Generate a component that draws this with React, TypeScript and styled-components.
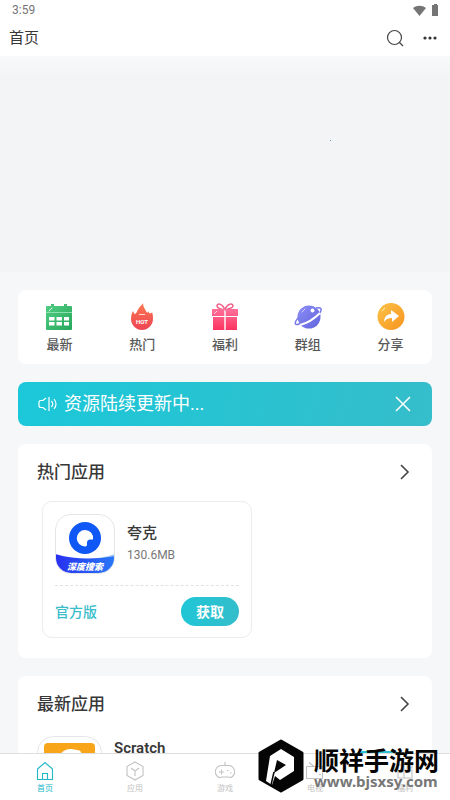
import React, { type ReactNode } from "react";
import styled, { createGlobalStyle } from "styled-components";

const GlobalStyle = createGlobalStyle`
  * { box-sizing: border-box; }
  body { margin: 0; background: #f6f7f9; }
  button { border: 0; padding: 0; background: none; font: inherit; color: inherit; cursor: pointer; }
  a { color: inherit; text-decoration: none; }
  h1, h2, h3, p { margin: 0; }
  svg { display: block; flex: none; }
`;

const Page = styled.div`
  position: relative;
  display: flex;
  flex-direction: column;
  height: 100vh;
  overflow: hidden;
  background: #f6f7f9;
  color: #383838;
  font-family: Roboto, "Noto Sans CJK SC", sans-serif;
`;

const StatusBar = styled.div`
  display: flex;
  flex: none;
  align-items: center;
  justify-content: space-between;
  height: 20px;
  padding: 0 11px 0 12px;
  background: #fff;
  color: #757575;
  font-size: 12px;
  line-height: 20px;
`;

const StatusIcons = styled.div`
  display: flex;
  align-items: center;
  gap: 5px;
`;

const TitleBar = styled.header`
  display: flex;
  flex: none;
  align-items: center;
  justify-content: space-between;
  height: 36px;
  padding: 0 12px 0 9px;
  background: #fff;
`;

const PageTitle = styled.h1`
  font-size: 15px;
  font-weight: 400;
  line-height: 20px;
`;

const TitleActions = styled.div`
  display: flex;
  align-items: center;
  gap: 18px;
`;

const Content = styled.main`
  flex: 1;
  min-height: 0;
  overflow: hidden;
`;

const Banner = styled.section`
  position: relative;
  height: 216px;
  background: linear-gradient(#f8f9fa, #f2f4f6 22px);
`;

const BannerDot = styled.span`
  position: absolute;
  top: 84px;
  right: 119px;
  width: 1px;
  height: 1px;
  background: #5fa3a0;
`;

const Sections = styled.div`
  display: flex;
  flex-direction: column;
  gap: 18px;
  padding: 18px;
`;

const Shortcuts = styled.nav`
  display: grid;
  grid-template-columns: repeat(5, 1fr);
  height: 74px;
  border-radius: 8px;
  background: #fff;
`;

const Shortcut = styled.a`
  display: flex;
  flex-direction: column;
  align-items: center;
  gap: 4px;
  padding-top: 13px;
  color: #585858;
  font-size: 13px;
  font-weight: 500;
  line-height: 20px;
`;

const Notice = styled.section`
  display: flex;
  align-items: center;
  gap: 6px;
  height: 44px;
  padding: 0 20px;
  border-radius: 8px;
  background: linear-gradient(100deg, #1bc8d9, #35bdca);
  color: #fff;
`;

const NoticeText = styled.p`
  flex: 1;
  font-size: 18px;
  line-height: 24px;
`;

const Card = styled.section`
  padding: 16px 19px 20px;
  border-radius: 8px;
  background: #fff;
`;

const CardHeader = styled.header`
  display: flex;
  align-items: center;
  justify-content: space-between;
  height: 24px;
`;

const CardTitle = styled.h2`
  font-size: 17px;
  font-weight: 500;
  line-height: 24px;
`;

const AppTile = styled.article`
  width: 210px;
  margin: 17px 5px 0;
  padding: 12px 12px 11px;
  border: 1px solid #ececee;
  border-radius: 10px;
`;

const AppSummary = styled.div`
  display: flex;
  align-items: center;
  gap: 12px;
  padding-bottom: 11px;
  border-bottom: 1px dashed #e2e2e4;
`;

const AppName = styled.h3`
  font-size: 15px;
  font-weight: 500;
  line-height: 22px;
`;

const AppSize = styled.p`
  color: #777;
  font-size: 12px;
  line-height: 22px;
`;

const AppFooter = styled.div`
  display: flex;
  align-items: center;
  justify-content: space-between;
  padding-top: 11px;
`;

const Edition = styled.span`
  color: #3bbdca;
  font-size: 14px;
  font-weight: 500;
  line-height: 20px;
`;

const GetButton = styled.button`
  width: 58px;
  height: 29px;
  border-radius: 15px;
  background: linear-gradient(100deg, #1fc6d7, #35bdca);
  color: #fff;
  font-size: 14px;
  font-weight: 700;
  line-height: 28px;
`;

const ListRow = styled.article`
  display: flex;
  gap: 12px;
  margin-top: 20px;
`;

const ListText = styled.div`
  flex: 1;
`;

const ListName = styled.h3`
  font-size: 15px;
  font-weight: 600;
  line-height: 24px;
`;

const ListAction = styled.div`
  padding: 15px 6px 0 0;
`;

const TabBar = styled.nav`
  display: grid;
  flex: none;
  grid-template-columns: repeat(5, 1fr);
  height: 47px;
  border-top: 1px solid #dcdee0;
  background: #fff;
`;

const Tab = styled.a<{ $active?: boolean }>`
  display: flex;
  flex-direction: column;
  align-items: center;
  gap: 1px;
  padding-top: 7px;
  color: ${(p) => (p.$active ? "#22b8c8" : "#c2c2c2")};
  font-size: 8px;
  line-height: 14px;
`;

const Watermark = styled.aside`
  position: absolute;
  right: 11px;
  bottom: 7px;
  display: flex;
  align-items: center;
  gap: 10px;
  pointer-events: none;
`;

const WatermarkText = styled.div`
  padding-top: 2px;
`;

const WatermarkName = styled.p`
  color: #050505;
  font-family: "Noto Sans CJK SC", sans-serif;
  font-size: 25px;
  font-weight: 700;
  line-height: 28px;
`;

const WatermarkUrl = styled.p`
  color: #777;
  font-family: "Noto Sans", sans-serif;
  font-size: 15px;
  font-weight: 700;
  line-height: 16px;
`;

const CalendarIcon = () => (
  <svg width="28" height="28" viewBox="0 0 28 28">
    <defs>
      <linearGradient id="cal" x1="0" y1="0" x2="1" y2="1">
        <stop stopColor="#50cd82" />
        <stop offset="1" stopColor="#27a75d" />
      </linearGradient>
    </defs>
    <path fill="#45bd76" d="M6 1h3v5H6zM19 1h3v5h-3z" />
    <path fill="url(#cal)" d="M2 3h24q1 0 1 1v22q0 1-1 1H2q-1 0-1-1V4q0-1 1-1z" />
    <path stroke="#8de0ad" d="M1 9.500h26" />
    <path stroke="#d9f8e4" strokeLinecap="round" d="M4 8l3-3" />
    <path
      fill="#fff"
      d="M4 14h5.500v3.500H4zM11.500 14H17v3.500h-5.500zM19 14h5v3.500h-5zM4 19h5.500v3.500H4zM11.500 19H17v3.500h-5.500zM19 19h5v3.500h-5z"
    />
  </svg>
);

const HotIcon = () => (
  <svg width="28" height="28" viewBox="0 0 28 28">
    <defs>
      <linearGradient id="hot" x1="0" y1="0" x2="0" y2="1">
        <stop stopColor="#fb7951" />
        <stop offset="1" stopColor="#ee4453" />
      </linearGradient>
    </defs>
    <path
      fill="url(#hot)"
      d="M15 0c0 4 2 6 3 8 1 2 2 2 2 0 1 2 2 3 3 2 1 0 1-1 1-1 1 3 1 5 1 7 0 6-5 11-11 11S3 22 3 16c0-4 1-6 2-8 1 2 1 3 2 3 2-1 2-4 4-6 2-3 3-3 4-5z"
    />
    <path stroke="#ffd8d1" d="M11 11.500h6" />
    <text x="14" y="21" textAnchor="middle" fill="#fff" fontFamily="Roboto, sans-serif" fontSize="6" fontWeight="700">
      HOT
    </text>
  </svg>
);

const GiftIcon = () => (
  <svg width="28" height="28" viewBox="0 0 28 28">
    <defs>
      <linearGradient id="gift" x1="0" y1="0" x2="0" y2="1">
        <stop stopColor="#ff719b" />
        <stop offset="1" stopColor="#fa345f" />
      </linearGradient>
    </defs>
    <path
      fill="none"
      stroke="#f25c86"
      strokeWidth="1.500"
      d="M13.500 7C9 6 6 5 6 3c0-3 5-3 7.500 3M14 7c4-1 8-2 8-4 0-3-5-3-8 3"
    />
    <path fill="url(#gift)" d="M1 6h12.300v7H1zM14.700 6H27v7H14.700zM2 14h11.300v13H2zM14.700 14H26v13H14.700z" />
    <path stroke="#ffd2df" d="M3 11l3-3" />
  </svg>
);

const PlanetIcon = () => (
  <svg width="28" height="28" viewBox="0 0 28 28">
    <defs>
      <linearGradient id="planet" x1="0" y1="0" x2="1" y2="1">
        <stop stopColor="#8b8df7" />
        <stop offset="1" stopColor="#6264dc" />
      </linearGradient>
    </defs>
    <circle cx="15" cy="14" r="11.500" fill="url(#planet)" />
    <path fill="none" stroke="#797bea" strokeWidth="1.500" d="M5 14c-5 5-5 9 0 7l3-1M22 5c5-1 7 1 3 6l-1 1" />
    <path fill="none" stroke="#fff" strokeWidth="2" d="M6 22c8-2 14-6 20-12" />
    <circle cx="18.500" cy="7.500" r="2" fill="#fff" />
    <path stroke="#d6d6ff" strokeLinecap="round" d="M8 9l3-3" />
  </svg>
);

const ShareIcon = () => (
  <svg width="28" height="28" viewBox="0 0 28 28">
    <defs>
      <linearGradient id="share" x1="0" y1="0" x2="1" y2="1">
        <stop stopColor="#fcc348" />
        <stop offset="1" stopColor="#f6931e" />
      </linearGradient>
    </defs>
    <circle cx="14" cy="13.500" r="13.500" fill="url(#share)" />
    <path fill="#fff" d="M14 7l8 6-7 6v-4c-4 0-6 1-8 4 0-5 3-8 7-8z" />
    <path stroke="#fff2bd" strokeLinecap="round" d="M5 8l3-3" />
  </svg>
);

const QuarkLogo = () => (
  <svg width="60" height="60" viewBox="0 0 60 60">
    <defs>
      <linearGradient id="quark" x1="0" x2="1">
        <stop stopColor="#282ff0" />
        <stop offset="1" stopColor="#2878f7" />
      </linearGradient>
      <clipPath id="quarkClip">
        <rect x="1" y="1" width="58" height="58" rx="15" />
      </clipPath>
    </defs>
    <rect x=".5" y=".5" width="59" height="59" rx="15" fill="#fff" stroke="#e5e5e7" />
    <g clipPath="url(#quarkClip)">
      <path fill="#a9c9fa" d="M34 45q15-1 26-5v8H34z" />
      <path fill="url(#quark)" d="M0 40q28 8 60 2v18H0z" />
    </g>
    <circle cx="30" cy="24" r="16" fill="#1058f5" />
    <path fill="#fff" d="M30 16a8 8 0 018 9.500h-2c-3 0-4 1-4 4 0 2 0 3-2 3a8 8 0 010-16.500z" />
    <text
      x="30"
      y="56"
      textAnchor="middle"
      fill="#fff"
      fontFamily="Noto Sans CJK SC, sans-serif"
      fontSize="9"
      fontWeight="900"
      fontStyle="italic"
    >
      深度搜索
    </text>
  </svg>
);

const ScratchLogo = () => (
  <svg width="65" height="65" viewBox="0 0 65 65">
    <rect x=".5" y=".5" width="64" height="64" rx="16" fill="#fff" stroke="#e5e5e7" />
    <rect x="7" y="7" width="51" height="51" rx="4" fill="#f9a51a" />
    <path fill="#fff" d="M22 25c0-8 5-12 12-12 3 0 4 1 6 1 4 0 5 3 5 7v20H22z" />
  </svg>
);

const Chevron = () => (
  <svg width="16" height="16" viewBox="0 0 16 16" fill="none" stroke="#444" strokeWidth="1.600">
    <path d="M4 1l7 7-7 7" />
  </svg>
);

const tabIcon = (children: ReactNode) => (
  <svg width="20" height="20" viewBox="0 0 20 20" fill="none" stroke="currentColor" strokeWidth="1.100">
    {children}
  </svg>
);

const shortcuts = [
  { label: "最新", icon: <CalendarIcon /> },
  { label: "热门", icon: <HotIcon /> },
  { label: "福利", icon: <GiftIcon /> },
  { label: "群组", icon: <PlanetIcon /> },
  { label: "分享", icon: <ShareIcon /> },
];

const tabs = [
  { label: "首页", icon: tabIcon(<path d="M2.500 8L10 1.500 17.500 8v10.500h-15zM7.500 18.500v-6h5v6" />) },
  { label: "应用", icon: tabIcon(<path d="M10 1l8 4.500v9L10 19l-8-4.500v-9zM6 7l4 3 4-3M10 10v5" />) },
  {
    label: "游戏",
    icon: tabIcon(
      <>
        <path d="M10 1v4M7 4.500h6a6.300 6.300 0 014.500 11c-2 2-3 .5-4 .5h-7c-1 0-2 1.500-4-.5A6.300 6.300 0 017 4.500zM4 11h5M6.500 8.500v5" />
        <path d="M12 9.500h1.500M15 12h1.500" />
      </>,
    ),
  },
  { label: "电视", icon: tabIcon(<path d="M1.500 5.500h16v12h-16zM4 1.500l5 4M14 13.500h2" />) },
  { label: "福利", icon: tabIcon(<path d="M3 4h6v13H3zM9 9h8v8H9zM12 3h5v4h-5z" />) },
];

const WatermarkLogo = () => (
  <svg width="46" height="54" viewBox="0 0 46 54">
    <path
      fill="#050505"
      stroke="#050505"
      strokeWidth="3"
      strokeLinejoin="round"
      d="M23 2l21 12v26L23 52 2 40V14z"
    />
    <path
      fill="#fff"
      fillRule="evenodd"
      d="M12 17l11-7 13 8v14L22 41l-5-4-3 9-6-4zM19 21l-3 13 12-8z"
    />
    <path stroke="#050505" strokeWidth="1.500" d="M16 33l-3 13" />
  </svg>
);

export default function App() {
  return (
    <Page>
      <GlobalStyle />
      <StatusBar>
        <span>3:59</span>
        <StatusIcons>
          <svg width="13" height="11" viewBox="0 0 13 11" fill="#757575">
            <path d="M0 3c4-3 9-3 13 0l-6.500 8z" />
          </svg>
          <svg width="8" height="12" viewBox="0 0 8 12" fill="#757575">
            <path d="M3 0h3v1h1v11H1V1h2z" />
          </svg>
        </StatusIcons>
      </StatusBar>
      <TitleBar>
        <PageTitle>首页</PageTitle>
        <TitleActions>
          <button type="button" aria-label="搜索">
            <svg width="18" height="18" viewBox="0 0 18 18" fill="none" stroke="#444" strokeWidth="1.200">
              <circle cx="8.500" cy="8.500" r="7" />
              <path d="M13 13l4 4" />
            </svg>
          </button>
          <button type="button" aria-label="更多">
            <svg width="16" height="4" viewBox="0 0 16 4" fill="#333">
              <circle cx="3" cy="2" r="1.600" />
              <circle cx="8" cy="2" r="1.600" />
              <circle cx="13" cy="2" r="1.600" />
            </svg>
          </button>
        </TitleActions>
      </TitleBar>
      <Content>
        <Banner>
          <BannerDot />
        </Banner>
        <Sections>
          <Shortcuts>
            {shortcuts.map((s) => (
              <Shortcut href="#" key={s.label}>
                {s.icon}
                {s.label}
              </Shortcut>
            ))}
          </Shortcuts>
          <Notice>
            <svg width="20" height="16" viewBox="0 0 20 16" fill="none" stroke="#fff" strokeWidth="1.200">
              <path d="M8 2L5 4.500H3q-2 0-2 2v3q0 2 2 2h2L8 14M11 1v14M13.500 5q2.500 3 0 6M16 3q4 5 0 10" />
            </svg>
            <NoticeText>资源陆续更新中...</NoticeText>
            <button type="button" aria-label="关闭">
              <svg width="18" height="18" viewBox="0 0 18 18" stroke="#fff" strokeWidth="1.500">
                <path d="M2 2l14 14M16 2L2 16" />
              </svg>
            </button>
          </Notice>
          <Card>
            <CardHeader>
              <CardTitle>热门应用</CardTitle>
              <button type="button" aria-label="查看热门应用">
                <Chevron />
              </button>
            </CardHeader>
            <AppTile>
              <AppSummary>
                <QuarkLogo />
                <div>
                  <AppName>夸克</AppName>
                  <AppSize>130.6MB</AppSize>
                </div>
              </AppSummary>
              <AppFooter>
                <Edition>官方版</Edition>
                <GetButton type="button">获取</GetButton>
              </AppFooter>
            </AppTile>
          </Card>
          <Card>
            <CardHeader>
              <CardTitle>最新应用</CardTitle>
              <button type="button" aria-label="查看最新应用">
                <Chevron />
              </button>
            </CardHeader>
            <ListRow>
              <ScratchLogo />
              <ListText>
                <ListName>Scratch</ListName>
              </ListText>
              <ListAction>
                <GetButton type="button">获取</GetButton>
              </ListAction>
            </ListRow>
          </Card>
        </Sections>
      </Content>
      <TabBar>
        {tabs.map((t, i) => (
          <Tab href="#" key={t.label} $active={i === 0}>
            {t.icon}
            {t.label}
          </Tab>
        ))}
      </TabBar>
      <Watermark>
        <WatermarkLogo />
        <WatermarkText>
          <WatermarkName>顺祥手游网</WatermarkName>
          <WatermarkUrl>www.bjsxsy.com</WatermarkUrl>
        </WatermarkText>
      </Watermark>
    </Page>
  );
}
